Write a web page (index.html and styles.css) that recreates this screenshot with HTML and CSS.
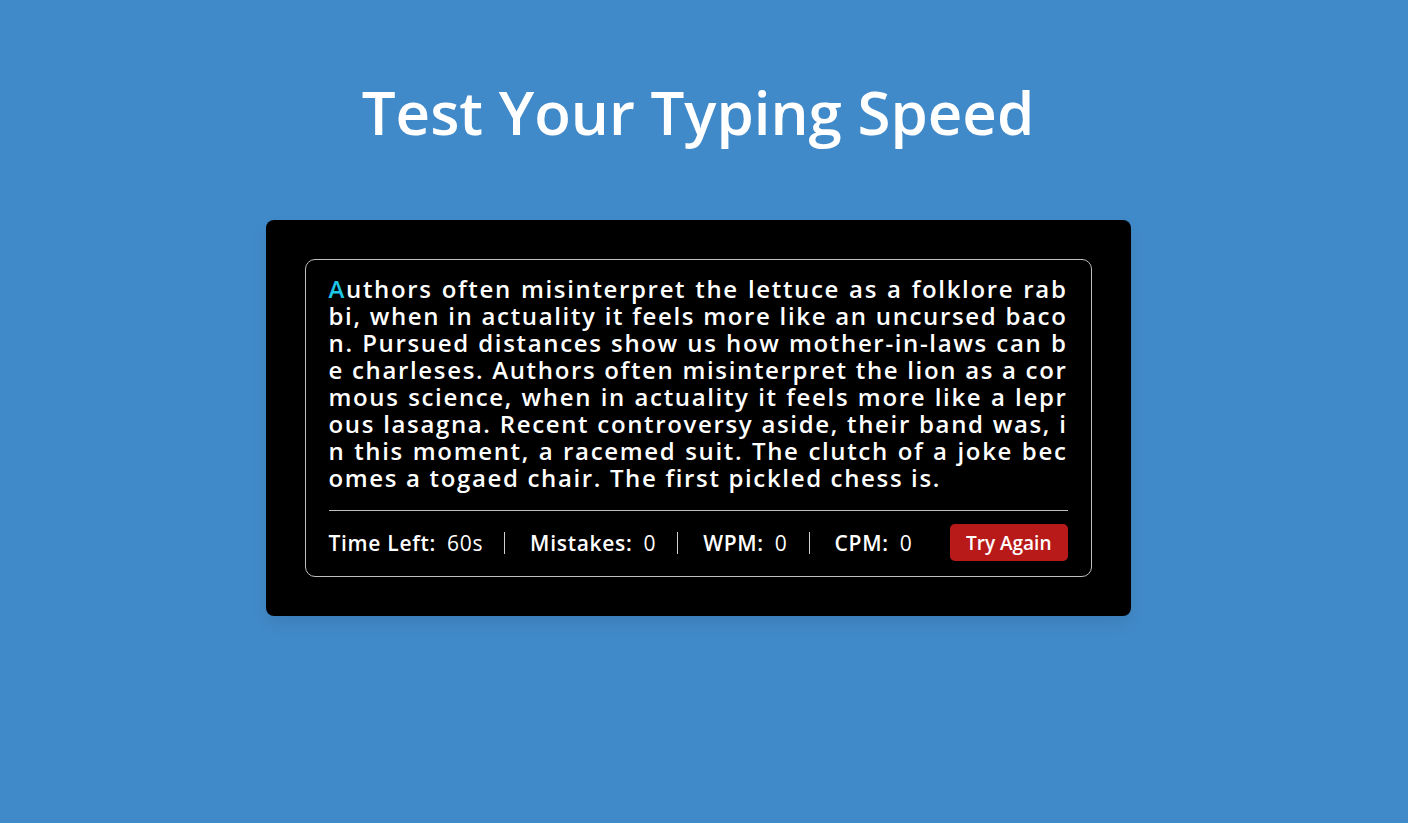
FILE: index.html
```html
<!DOCTYPE html>
<html lang="en">
<head>
<meta charset="utf-8">
<title>Typing Speed Test</title>
<link rel="stylesheet" href="styles.css">
</head>
<body>
<div class="page">
  <h1 class="title">Test Your Typing Speed</h1>
  <div class="card">
    <div class="panel">
      <p class="paragraph"><span class="active">A</span>uthors often misinterpret the lettuce as a folklore rabbi, when in actuality it feels more like an uncursed bacon. Pursued distances show us how mother-in-laws can be charleses. Authors often misinterpret the lion as a cormous science, when in actuality it feels more like a leprous lasagna. Recent controversy aside, their band was, in this moment, a racemed suit. The clutch of a joke becomes a togaed chair. The first pickled chess is.</p>
      <div class="footer">
        <ul class="stats">
          <li class="stat"><span class="label">Time Left:</span><span class="value">60s</span></li>
          <li class="stat"><span class="label">Mistakes:</span><span class="value">0</span></li>
          <li class="stat"><span class="label">WPM:</span><span class="value">0</span></li>
          <li class="stat"><span class="label">CPM:</span><span class="value">0</span></li>
        </ul>
        <button class="retry">Try Again</button>
      </div>
    </div>
  </div>
</div>
</body>
</html>
```

FILE: styles.css
```css
* { box-sizing: border-box; }
html, body { margin: 0; padding: 0; }
body {
  background: #418ac9;
  font-family: "Open Sans", "DejaVu Sans", sans-serif;
  color: #fff;
  min-height: 823px;
}
.page {
  padding: 72px 12px 0 0;
  display: flex;
  flex-direction: column;
  align-items: center;
}
.title {
  margin: 0;
  font-size: 60px;
  line-height: 80px;
  font-weight: 600;
  color: #fff;
}
.card {
  margin-top: 68px;
  width: 865px;
  padding: 39px;
  background: #000;
  border-radius: 8px;
  box-shadow: 0 8px 16px rgba(0, 0, 0, 0.08);
}
.panel {
  border: 1px solid #bfbfbf;
  border-radius: 10px;
  padding: 15px 23px 0;
}
.paragraph {
  margin: 0;
  font-size: 24px;
  line-height: 27px;
  font-weight: 600;
  text-align: justify;
  word-break: break-all;
  letter-spacing: 1.65px;
}
.active { color: #1ec6e8; }
.footer {
  margin-top: 19px;
  border-top: 1px solid #bfbfbf;
  display: flex;
  align-items: center;
  justify-content: space-between;
  padding: 13px 0 15px;
}
.stats {
  list-style: none;
  margin: 0;
  padding: 0;
  display: flex;
  align-items: center;
}
.stat {
  display: flex;
  align-items: center;
  gap: 11px;
  height: 22px;
  padding: 0 21px 0 25px;
  border-right: 1px solid #cfcfcf;
  font-size: 21px;
  letter-spacing: 0.7px;
}
.stat:first-child { padding-left: 0; }
.stat:last-child { border-right: none; padding-right: 0; }
.label { font-weight: 600; }
.value { font-weight: 400; }
.retry {
  height: 37px;
  padding: 0 16px;
  border: none;
  border-radius: 5px;
  background: #b81a1a;
  color: #fff;
  font-family: inherit;
  font-size: 19px;
  font-weight: 600;
}
```
